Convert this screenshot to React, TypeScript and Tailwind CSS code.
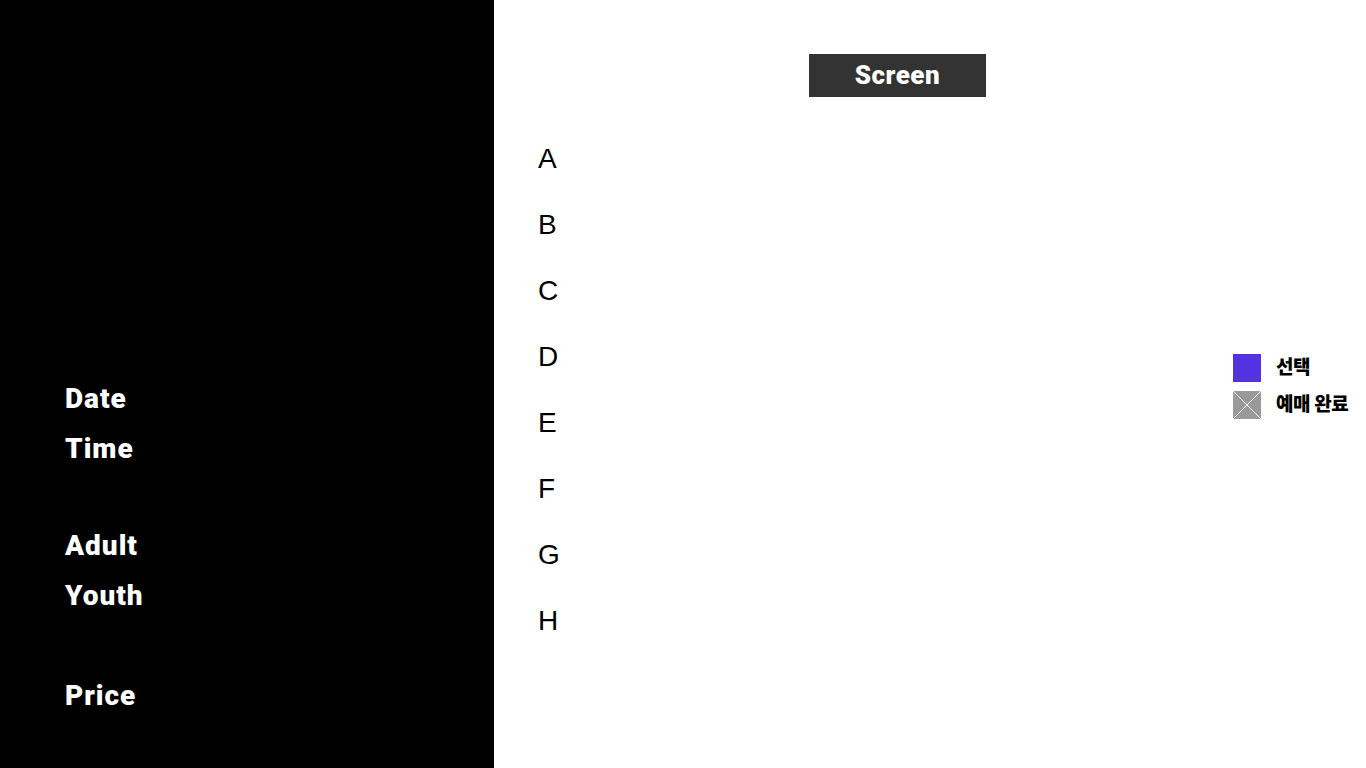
import React from "react";

const rows = ["A", "B", "C", "D", "E", "F", "G", "H"];
const bold = { fontFamily: "Roboto, 'Noto Sans CJK KR', sans-serif" };

export default function App() {
  return (
    <div className="flex w-[1366px] h-[768px] bg-white overflow-hidden">
      <div className="w-[494px] h-full bg-black text-white flex flex-col pl-[65px] pt-[374px]" style={bold}>
        <div className="text-[28px] font-black tracking-[1px] leading-[50px]">Date</div>
        <div className="text-[28px] font-black tracking-[1px] leading-[50px]">Time</div>
        <div className="h-[47px]" />
        <div className="text-[28px] font-black tracking-[1px] leading-[50px]">Adult</div>
        <div className="text-[28px] font-black tracking-[1px] leading-[50px]">Youth</div>
        <div className="h-[50px]" />
        <div className="text-[28px] font-black tracking-[1px] leading-[50px]">Price</div>
      </div>
      <div className="relative flex-1 h-full">
        <div className="absolute left-[315px] top-[54px] w-[177px] h-[43px] bg-[#333333] text-white flex items-center justify-center text-[26px] font-black tracking-[0.5px]" style={bold}>
          Screen
        </div>
        <div className="flex flex-col pl-[44px] pt-[137px]" style={{ fontFamily: "'Liberation Sans', Arial, sans-serif" }}>
          {rows.map((r) => (
            <div key={r} className="h-[66px] text-[28px] leading-[44px] text-black">{r}</div>
          ))}
        </div>
        <div className="absolute left-[739px] top-[354px] flex flex-col gap-[8px]" style={bold}>
          <div className="flex items-center gap-[15px]">
            <div className="w-[28px] h-[28px] bg-[#5233e0]" />
            <span className="text-[19px] font-black text-black tracking-[-0.5px]">선택</span>
          </div>
          <div className="flex items-center gap-[15px]">
            <svg width="28" height="28" viewBox="0 0 28 28">
              <rect width="28" height="28" fill="#9a9a9a" />
              <line x1="0" y1="0" x2="28" y2="28" stroke="#fff" strokeWidth="1" />
              <line x1="28" y1="0" x2="0" y2="28" stroke="#fff" strokeWidth="1" />
            </svg>
            <span className="text-[19px] font-black text-black tracking-[-0.5px]">예매 완료</span>
          </div>
        </div>
      </div>
    </div>
  );
}
